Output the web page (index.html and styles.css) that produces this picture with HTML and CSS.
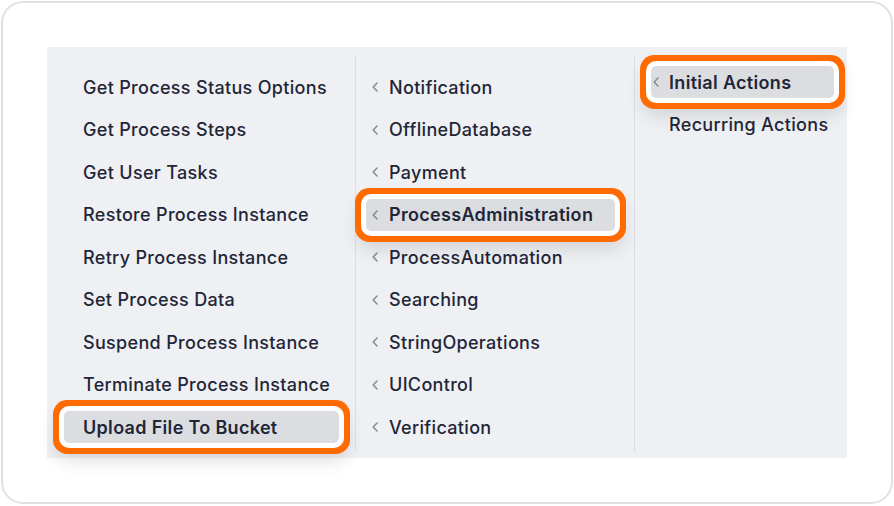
FILE: index.html
```html
<!DOCTYPE html>
<html lang="en">

<head>
  <meta charset="UTF-8" />
  <meta name="viewport" content="width=device-width, initial-scale=1.0" />
  <title>Process Menu</title>
  <link rel="stylesheet" href="styles.css">
</head>

<body>
  <div class="card">
    <div class="panel">
      <ul class="col col-actions">
        <li class="item">Get Process Status Options</li>
        <li class="item">Get Process Steps</li>
        <li class="item">Get User Tasks</li>
        <li class="item">Restore Process Instance</li>
        <li class="item">Retry Process Instance</li>
        <li class="item">Set Process Data</li>
        <li class="item">Suspend Process Instance</li>
        <li class="item">Terminate Process Instance</li>
        <li class="item active">Upload File To Bucket</li>
      </ul>

      <ul class="col col-groups">
        <li class="item"><svg class="chev" viewBox="0 0 6 10"><path d="M5 1 L1.2 5 L5 9" /></svg>Notification</li>
        <li class="item"><svg class="chev" viewBox="0 0 6 10"><path d="M5 1 L1.2 5 L5 9" /></svg>OfflineDatabase</li>
        <li class="item"><svg class="chev" viewBox="0 0 6 10"><path d="M5 1 L1.2 5 L5 9" /></svg>Payment</li>
        <li class="item active"><svg class="chev" viewBox="0 0 6 10"><path d="M5 1 L1.2 5 L5 9" /></svg>ProcessAdministration</li>
        <li class="item"><svg class="chev" viewBox="0 0 6 10"><path d="M5 1 L1.2 5 L5 9" /></svg>ProcessAutomation</li>
        <li class="item"><svg class="chev" viewBox="0 0 6 10"><path d="M5 1 L1.2 5 L5 9" /></svg>Searching</li>
        <li class="item"><svg class="chev" viewBox="0 0 6 10"><path d="M5 1 L1.2 5 L5 9" /></svg>StringOperations</li>
        <li class="item"><svg class="chev" viewBox="0 0 6 10"><path d="M5 1 L1.2 5 L5 9" /></svg>UIControl</li>
        <li class="item"><svg class="chev" viewBox="0 0 6 10"><path d="M5 1 L1.2 5 L5 9" /></svg>Verification</li>
      </ul>

      <ul class="col col-types">
        <li class="item active"><svg class="chev" viewBox="0 0 6 10"><path d="M5 1 L1.2 5 L5 9" /></svg>Initial Actions</li>
        <li class="item">Recurring Actions</li>
      </ul>
    </div>
  </div>
</body>

</html>
```

FILE: styles.css
```css
* {
  margin: 0;
  padding: 0;
  box-sizing: border-box;
}

body {
  font-family: 'Inter', 'Noto Sans', sans-serif;
  background: #fff;
  color: #1f2638;
  padding: 1px;
}

.card {
  width: 892px;
  height: 503px;
  border: 2px solid #dfe1e5;
  border-radius: 22px;
  padding: 44px 44px 42px 44px;
  background: #fff;
}

.panel {
  display: flex;
  height: 411px;
  background: #eff0f3;
  padding: 8px 0 6px;
}

.col {
  list-style: none;
  display: flex;
  flex-direction: column;
  gap: 10.5px;
}

.col-actions {
  width: 309px;
  padding: 16px 16px 0 17px;
  border-right: 1px solid #dcdee2;
}

.col-groups {
  width: 279px;
  padding: 16px 19px 0 10px;
  border-right: 1px solid #dcdee2;
}

.col-types {
  flex: 1;
  padding: 11px 13px 0 16px;
}

.item {
  display: flex;
  align-items: center;
  height: 32px;
  font-size: 18px;
  font-weight: 500;
  letter-spacing: 0.32px;
  border-radius: 5px;
  white-space: nowrap;
}

.col-actions .item {
  padding-left: 19px;
}

.col-groups .item {
  padding-left: 6px;
}

.col-types .item {
  padding-left: 2px;
}

.col-types .item:not(:has(.chev)) {
  padding-left: 18px;
}

.chev {
  width: 6px;
  height: 10px;
  margin-right: 11px;
  flex-shrink: 0;
}

.chev path {
  fill: none;
  stroke: #858a93;
  stroke-width: 1.5;
  stroke-linecap: round;
  stroke-linejoin: round;
}

.col-types .chev {
  margin-right: 10px;
}

.item.active {
  background: #dcdde1;
  font-weight: 600;
  position: relative;
  z-index: 1;
  box-shadow: 0 0 0 5px #fff, 0 0 0 11px #ff6b00, 0 10px 18px 8px rgba(0, 0, 0, 0.12);
}
```
